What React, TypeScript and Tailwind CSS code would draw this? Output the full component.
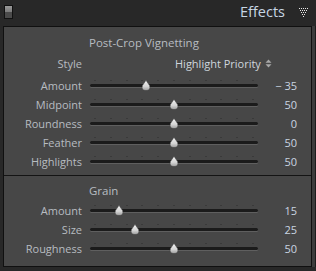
import React from "react";

type Row = { label: string; value: string; frac: number };

const vignette: Row[] = [
  { label: "Amount", value: "\u2212 35", frac: 0.325 },
  { label: "Midpoint", value: "50", frac: 0.5 },
  { label: "Roundness", value: "0", frac: 0.5 },
  { label: "Feather", value: "50", frac: 0.5 },
  { label: "Highlights", value: "50", frac: 0.5 },
];

const grain: Row[] = [
  { label: "Amount", value: "15", frac: 0.15 },
  { label: "Size", value: "25", frac: 0.25 },
  { label: "Roughness", value: "50", frac: 0.5 },
];

const ticks = Array.from({ length: 11 }, (_, i) => i);

function Thumb() {
  return (
    <svg width="10" height="11" viewBox="0 0 10 11">
      <defs>
        <linearGradient id="tg" x1="0" y1="0" x2="0" y2="1">
          <stop offset="0" stopColor="#f2f2f2" />
          <stop offset="0.6" stopColor="#d4d4d4" />
          <stop offset="1" stopColor="#9a9a9a" />
        </linearGradient>
      </defs>
      <path d="M5 0.3 L8.6 5.6 Q10 10.6 5 10.6 Q0 10.6 1.4 5.6 Z" fill="url(#tg)" stroke="#3a3a3a" strokeWidth="0.5" />
    </svg>
  );
}

function Slider({ frac }: { frac: number }) {
  return (
    <div className="relative w-[168px] h-full">
      {ticks.map((i) => (
        <div
          key={i}
          className="absolute top-[4px] w-[2px] h-[1px] bg-[#3a3a3a]"
          style={{ left: 4 + i * 15.8 }}
        />
      ))}
      <div className="absolute left-0 right-0 top-[8px] h-[3px] rounded-full bg-[#1b1b1b] shadow-[0_1px_0_#5f5f5f]" />
      <div className="absolute top-[4px]" style={{ left: 5 + frac * 158 - 5 }}>
        <Thumb />
      </div>
    </div>
  );
}

function SliderRow({ r }: { r: Row }) {
  return (
    <div className="flex h-[19px] items-center">
      <div className="w-[78px] text-right text-[#b7bcc1] leading-none">{r.label}</div>
      <div className="ml-[8px] h-full">
        <Slider frac={r.frac} />
      </div>
      <div className="w-[39px] text-right text-[#c9d5e1] leading-none">{r.value}</div>
    </div>
  );
}

function UpDown() {
  return (
    <svg width="7" height="9" viewBox="0 0 7 9" className="ml-[4px]">
      <path d="M3.5 0.5 L6.5 3.8 L0.5 3.8 Z" fill="#a8a8a8" />
      <path d="M3.5 8.5 L6.5 5.2 L0.5 5.2 Z" fill="#a8a8a8" />
    </svg>
  );
}

function Triangle() {
  const dots: { x: number; y: number }[] = [];
  for (let r = 0; r < 5; r++) {
    const n = 5 - r;
    for (let k = 0; k < n; k++) dots.push({ x: r + k * 2, y: r * 2 });
  }
  return (
    <svg width="10" height="9" viewBox="0 0 10 9">
      {dots.map((d, i) => (
        <rect key={i} x={d.x} y={d.y} width="1" height="1" fill="#e8e8e8" />
      ))}
    </svg>
  );
}

export default function App() {
  return (
    <div className="w-[316px] h-[271px] bg-[#282828] font-['Open_Sans',sans-serif] text-[11px] overflow-hidden">
      <div className="h-[26px] flex items-center">
        <div className="ml-[4px] mb-[2px] w-[9px] h-[14px] border border-[#111] flex flex-col">
          <div className="flex-1 bg-gradient-to-b from-[#9a9a9a] to-[#7a7a7a]" />
          <div className="flex-1 bg-[#4a4a4a]" />
        </div>
        <div className="ml-auto text-[14.5px] text-[#c7d6e4] leading-none mb-[1px]">Effects</div>
        <div className="ml-[14px] mr-[7px] mb-[2px]">
          <Triangle />
        </div>
      </div>
      <div className="flex">
        <div className="ml-[3px] w-[309px] h-[241px] border border-[#101010] bg-[#474747] flex flex-col">
          <div className="pt-[6px]">
            <div className="h-[20px] flex items-center pl-[85px] text-[11.5px] text-[#b7bcc1] leading-none">
              Post-Crop Vignetting
            </div>
            <div className="h-[20px] flex items-center">
              <div className="w-[78px] text-right text-[#b7bcc1] leading-none">Style</div>
              <div className="ml-[93px] flex items-center text-[#cfd6dd] leading-none">
                Highlight Priority
                <UpDown />
              </div>
            </div>
            <div className="mt-[3px] pb-[4px]">
              {vignette.map((r) => (
                <SliderRow key={r.label} r={r} />
              ))}
            </div>
          </div>
          <div className="h-[1px] bg-[#141414]" />
          <div className="pt-[5px]">
            <div className="h-[20px] flex items-center pl-[85px] text-[11.5px] text-[#b7bcc1] leading-none">
              Grain
            </div>
            {grain.map((r) => (
              <SliderRow key={r.label} r={r} />
            ))}
          </div>
        </div>
        <div className="w-[3px] h-[241px] bg-[#3c3c3c]" />
        <div className="w-[1px] h-[241px] bg-[#1c1c1c]" />
      </div>
    </div>
  );
}
